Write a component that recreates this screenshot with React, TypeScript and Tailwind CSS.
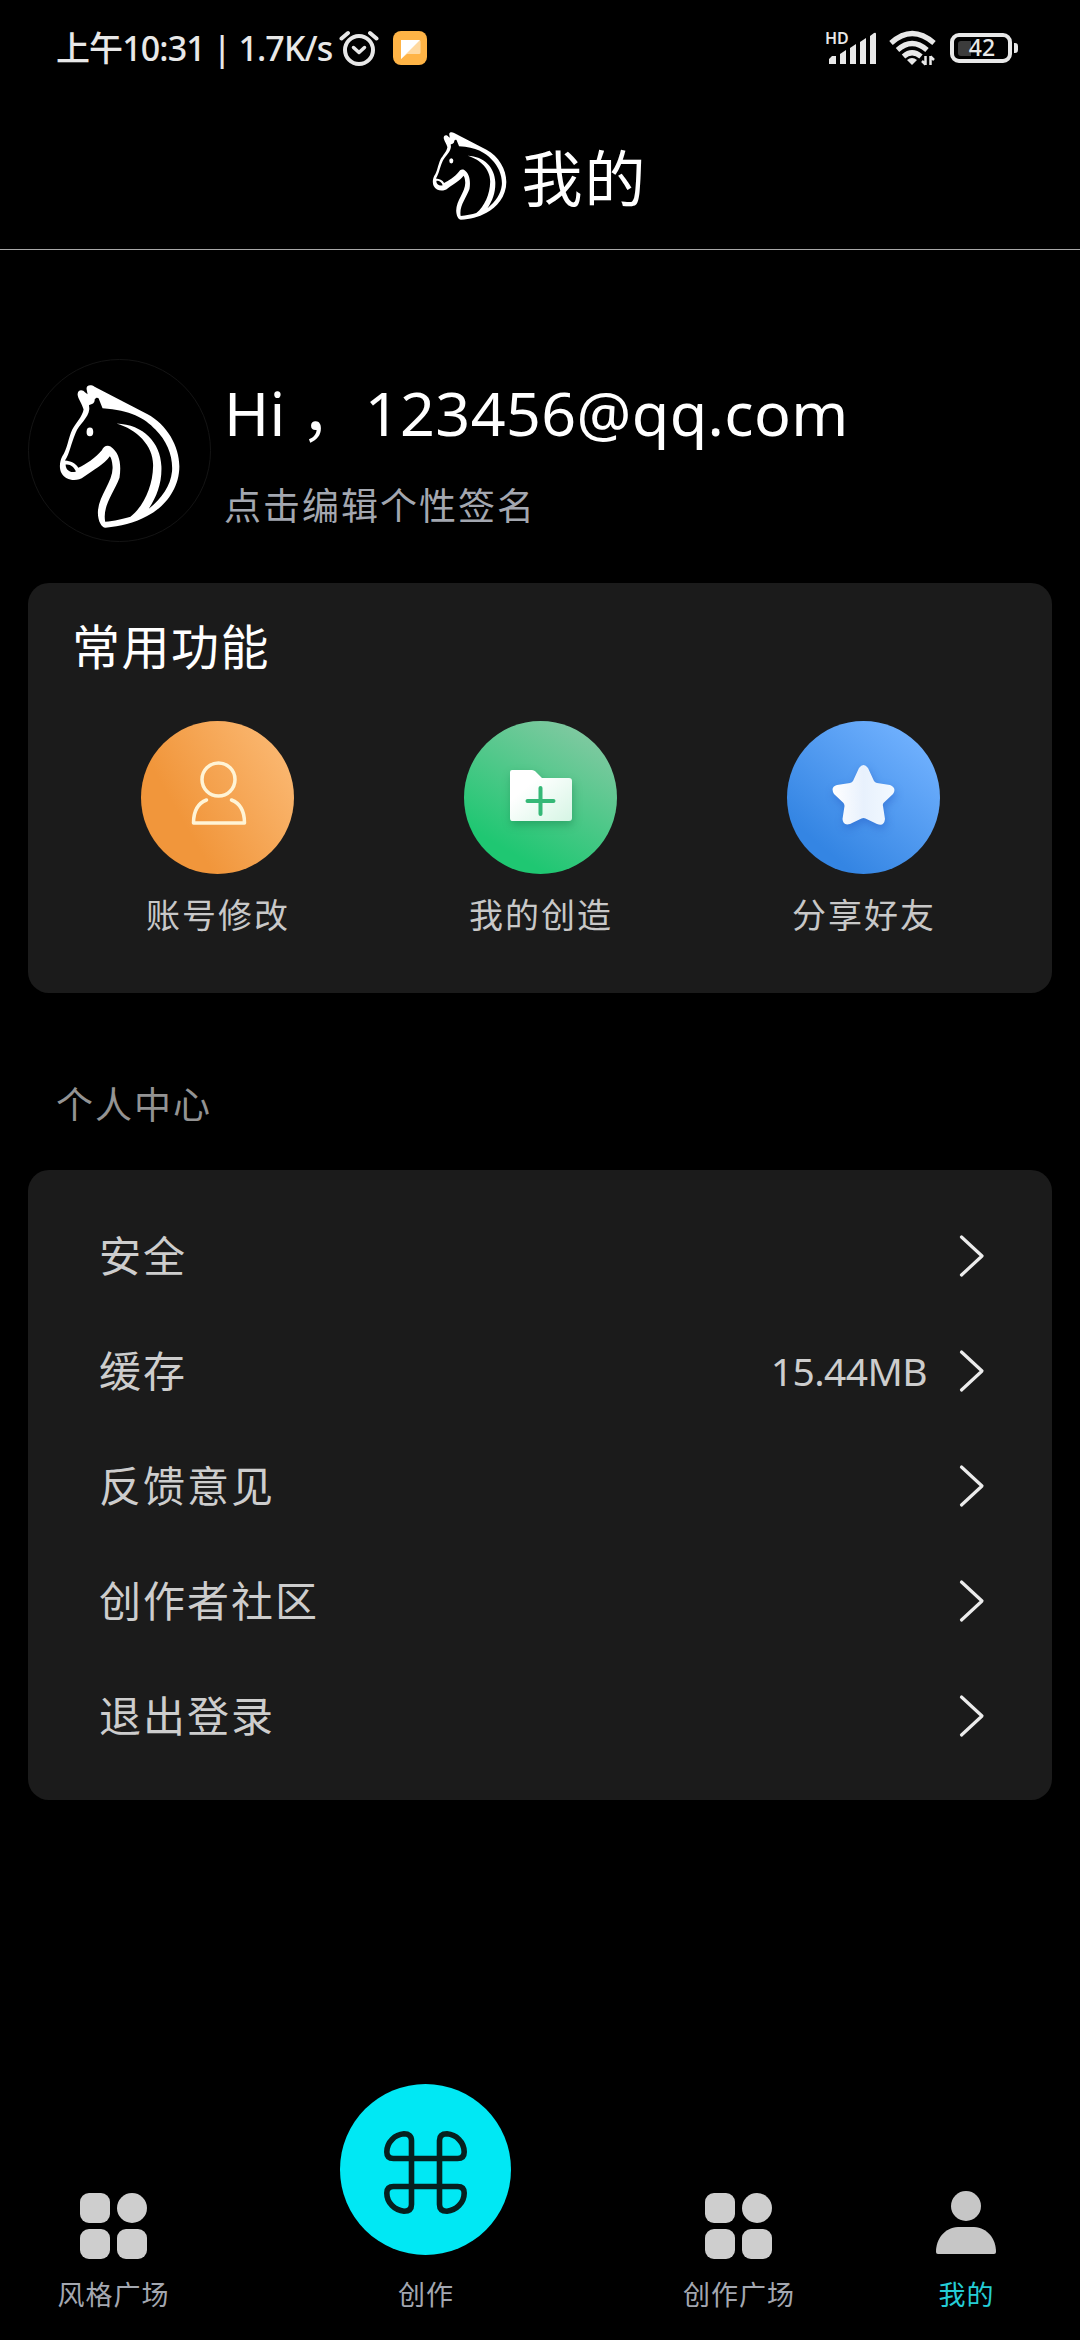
import type { ReactNode } from "react";

const menu = [
  { label: "安全" },
  { label: "缓存", value: "15.44MB" },
  { label: "反馈意见" },
  { label: "创作者社区" },
  { label: "退出登录" },
];

function HorseLogo({ className }: { className: string }) {
  return (
    <svg viewBox="116 106 362 430" className={className} fill="white">
      <path
        fillRule="evenodd"
        d="M198 118C197 105 212 105 222 111L380 193C440 225 477 290 477 350C477 420 430 475 380 500C340 522 300 530 255 535C243 535 232 515 232 490C232 440 280 395 276 350C275 335 272 325 268 320C250 345 220 360 190 382C170 398 135 395 122 370C115 355 117 335 125 320C140 300 143 265 155 240C165 222 186 200 189 180C186 165 170 145 171 133C173 117 188 120 193 128L201 134Z
        M234 146L246 176C330 182 372 205 405 240C440 275 458 320 455 365C450 410 425 445 385 478C410 440 425 400 423 350C420 280 370 225 288 222C350 240 400 290 398 350C397 410 370 470 330 502C310 508 280 515 254 517C245 470 280 430 297 385C303 345 298 310 270 291C258 285 248 293 244 302C225 325 195 345 173 355C165 340 150 335 133 333C148 310 150 285 165 250C175 225 204 205 206 180C207 172 204 168 206 166C216 164 224 158 222 150C226 144 230 143 234 146Z
        M135 345C150 343 160 352 166 366C150 372 135 362 135 345Z"
      />
      <ellipse cx="208" cy="247" rx="10" ry="13" />
    </svg>
  );
}

function StatusBar() {
  return (
    <div className="flex h-[95px] items-center pl-[56px] pr-[62px] text-[#e8e8e8]">
      <span className="whitespace-pre text-[34px] font-medium leading-none tracking-[-0.9px]">上午10:31 | 1.7K/s</span>
      <svg viewBox="0 0 40 36" className="ml-[7px] h-9 w-10" fill="none" stroke="currentColor" strokeWidth="4" strokeLinecap="round" strokeLinejoin="round">
        <circle cx="20" cy="20" r="14" />
        <path d="M2.5 8.5L9 3M37.5 8.5L31 3" />
        <path d="M14.5 17.5L20 22.5L25.5 17.5" strokeWidth="3.5" />
      </svg>
      <svg viewBox="0 0 34 34" className="ml-[14px] h-[34px] w-[34px]">
        <rect width="34" height="34" rx="8" fill="#ffb446" />
        <path d="M8 9h18q1.500 0 1.500 1.500v11q0 1.500-1.500 1.500H14L8 28z" fill="#ffd9a0" />
        <path d="M8 9h19L8 28z" fill="white" />
      </svg>
      <div className="flex-1" />
      <div className="relative mr-px h-[34px] w-[52px]">
        <span className="absolute left-[-1px] top-[-3px] text-[16px] font-semibold leading-5">HD</span>
        <svg viewBox="0 0 52 34" className="h-[34px] w-[52px]" fill="currentColor">
          <path d="M3 28l3-3h4v8H3zM14 23l6-4v14h-6zM24 17l6-4v20h-6zM34 11l6-4v26h-6zM44 5l4-3q2-1 2 1v30h-6z" />
        </svg>
      </div>
      <svg viewBox="0 0 47 36" className="ml-[10px] h-9 w-[47px]" fill="none" stroke="currentColor" strokeWidth="5.200">
        <path d="M2 13Q23 -6 45 13M8.500 20Q23 7 38 20M14.500 26.500Q23 19 32 26.500" />
        <path d="M18 30Q23 26 28 30L23 35Z" fill="currentColor" stroke="none" />
        <path d="M36.500 26v9M33 31l3.500 3.500M41.500 35v-9M45 30l-3.500-3.500" strokeWidth="2.500" />
      </svg>
      <div className="relative ml-[14px] flex h-[30px] w-[62px] items-center justify-center rounded-[9px] border-4 border-[#e8e8e8]">
        <div className="absolute left-1 top-1 h-[15px] w-[13px] rounded-l-[3px] bg-[#3c3c3c]" />
        <span className="relative ml-[2px] text-[23px] font-medium leading-none">42</span>
      </div>
      <div className="ml-[2px] h-[10px] w-1 rounded-r-[3px] bg-[#e8e8e8]" />
    </div>
  );
}

function Feature({ label, color, children }: { label: string; color: string; children: ReactNode }) {
  return (
    <div className="flex w-[323px] flex-col items-center">
      <div className={`h-[153px] w-[153px] rounded-full ${color}`}>{children}</div>
      <span className="mt-[17px] pl-[2px] text-[34px] leading-[48px] tracking-[2px] text-[#c8c8c8]">{label}</span>
    </div>
  );
}

function GridIcon() {
  return (
    <div className="grid grid-cols-2 gap-x-[7px] gap-y-[6px]">
      <div className="h-[30px] w-[30px] rounded-[9px] bg-[#cecece]" />
      <div className="h-[30px] w-[30px] rounded-full bg-[#cecece]" />
      <div className="h-[30px] w-[30px] rounded-[9px] bg-[#cecece]" />
      <div className="h-[30px] w-[30px] rounded-[9px] bg-[#cecece]" />
    </div>
  );
}

function NavItem({ label, width, active, children }: { label: string; width: string; active?: boolean; children: ReactNode }) {
  return (
    <div className={`flex flex-col items-center justify-end ${width}`}>
      {children}
      <span className={`pl-px text-[27px] leading-10 tracking-[1px] ${active ? "text-[#25cdd6]" : "text-[#a3a7b0]"}`}>{label}</span>
    </div>
  );
}

export default function App() {
  return (
    <div className="flex h-[2340px] w-[1080px] flex-col overflow-hidden bg-black font-['Noto_Sans','Noto_Sans_CJK_SC',sans-serif] text-white">
      <StatusBar />

      <header className="flex h-[155px] items-center justify-center border-b border-[#a8a8a8] pt-[8px]">
        <HorseLogo className="h-[88px] w-[75px]" />
        <h1 className="ml-[14px] pt-[5px] text-[61px] leading-none tracking-[2px]">我的</h1>
      </header>

      <section className="mt-[109px] flex h-[184px] pl-[28px]">
        <div className="flex h-[183px] w-[183px] items-center justify-center rounded-full border border-[#141414] pt-[11px]">
          <HorseLogo className="h-[143px] w-[121px]" />
        </div>
        <div className="ml-[13px] pt-[12px]">
          <div className="flex text-[61px] leading-[84px] tracking-[0.4px]">
            <span>Hi</span>
            <span className="ml-[15px] w-[64px]">，</span>
            <span>123456@qq.com</span>
          </div>
          <p className="mt-[25px] text-[37px] leading-[52px] tracking-[2px] text-[#a3a7b0]">点击编辑个性签名</p>
        </div>
      </section>

      <section className="mx-[28px] mt-[40px] h-[410px] rounded-[21px] bg-[#1b1b1b]">
        <h2 className="px-[44px] pt-[29px] text-[48px] leading-[70px] tracking-[1.500px]">常用功能</h2>
        <div className="mt-[39px] flex justify-center">
          <Feature label="账号修改" color="bg-linear-[60deg,#f1963b_30%,#fcbd7a]">
            <svg viewBox="0 0 153 153" fill="none" stroke="#fff4d6" strokeWidth="3.500" strokeLinecap="round" strokeLinejoin="round">
              <circle cx="77.500" cy="58.500" r="16.500" />
              <path d="M65.500 79Q52.500 84 52.500 102H103.500Q103.500 84 90.500 79" />
            </svg>
          </Feature>
          <Feature label="我的创造" color="bg-linear-[30deg,#1fc772_20%,#82c9a2_90%]">
            <svg viewBox="0 0 153 153" className="drop-shadow-[1px_4px_4px_rgba(0,90,45,0.3)]">
              <defs>
                <linearGradient id="folder" x1="0" y1="0" x2="1" y2="1">
                  <stop offset="0.300" stopColor="white" />
                  <stop offset="1" stopColor="#d5f5e4" />
                </linearGradient>
              </defs>
              <path d="M48 49H68Q70 49 71.500 50.500L78 57H105Q108 57 108 60V97Q108 100 105 100H48Q46 100 46 97V51Q46 49 48 49Z" fill="url(#folder)" />
              <path d="M63.500 80H89.500M76.500 67V93" stroke="#35b877" strokeWidth="4" strokeLinecap="round" />
            </svg>
          </Feature>
          <Feature label="分享好友" color="bg-linear-[40deg,#3485e3_20%,#72b2ff_90%]">
            <svg viewBox="0 0 153 153" className="drop-shadow-[1px_4px_4px_rgba(30,80,190,0.4)]">
              <defs>
                <linearGradient id="star">
                  <stop offset="0" stopColor="white" />
                  <stop offset="0.500" stopColor="#e8f1fd" />
                  <stop offset="1" stopColor="#f2f9ff" />
                </linearGradient>
              </defs>
              <path d="M72 47Q76.500 41 81 47L87 60Q88 61.500 90 62L103 64Q110 67 106 73L96.500 82Q95.500 83.500 96 85L98 98Q97 106 90 103L78.500 97.500Q76.500 96.500 74.500 97.500L63 103Q56 105 55.500 98L57.500 85Q57.500 83.500 56.500 82L47 73Q43 66 50 64L63 62Q65 61.500 66 60Z" fill="url(#star)" />
            </svg>
          </Feature>
        </div>
      </section>

      <h3 className="ml-[56px] mt-[86px] text-[37px] leading-[52px] tracking-[2px] text-[#939393]">个人中心</h3>

      <section className="mx-[28px] mt-[39px] h-[630px] rounded-[21px] bg-[#1b1b1b] pl-[71px] pr-[67px] pt-[28px]">
        {menu.map((item) => (
          <div key={item.label} className="flex h-[115px] items-center text-[#cdcdcd]">
            <span className="flex-1 text-[42px] leading-[60px] tracking-[2px]">{item.label}</span>
            {item.value && <span className="mr-[31px] text-[39px] leading-none tracking-[-0.6px]">{item.value}</span>}
            <svg viewBox="0 0 27 44" className="h-11 w-[27px]" fill="none" stroke="#ececec" strokeWidth="3.200" strokeLinecap="round" strokeLinejoin="round">
              <path d="M3.500 3L24 22L3.500 41" />
            </svg>
          </div>
        ))}
      </section>

      <nav className="mt-auto flex pb-[25px]">
        <NavItem label="风格广场" width="w-[226px]">
          <div className="mb-[16px]"><GridIcon /></div>
        </NavItem>
        <NavItem label="创作" width="w-[399px]">
          <div className="mb-[20px] flex h-[171px] w-[171px] items-center justify-center rounded-full bg-[#00e8f4] pt-[5px]">
            <svg viewBox="0 0 83 83" className="h-[83px] w-[83px]" fill="none" stroke="#06201f" strokeWidth="5.600">
              <path d="M27.500 55.500V9.500Q27.500 2.800 20 2.800C11 3.500 2.800 11 2.800 21Q2.800 27.500 9.500 27.500H73.500Q80.200 27.500 80.200 21C80.200 11 72 3.500 63 2.800Q55.500 2.800 55.500 9.500V73.500Q55.500 80.200 63 80.200C72 79.500 80.200 72 80.200 62Q80.200 55.500 73.500 55.500H9.500Q2.800 55.500 2.800 62C2.800 72 11 79.500 20 80.200Q27.500 80.200 27.500 73.500Z" />
            </svg>
          </div>
        </NavItem>
        <NavItem label="创作广场" width="w-[227px]">
          <div className="mb-[16px]"><GridIcon /></div>
        </NavItem>
        <NavItem label="我的" width="w-[228px]" active>
          <svg viewBox="0 0 60 63" className="mb-[21px] h-[63px] w-[60px]" fill="#c6c6c6">
            <circle cx="30" cy="15" r="15" />
            <path d="M22 36H38C52 37 60 48 60 61Q60 63 58 63H2Q0 63 0 61C0 48 8 37 22 36Z" />
          </svg>
        </NavItem>
      </nav>
    </div>
  );
}
